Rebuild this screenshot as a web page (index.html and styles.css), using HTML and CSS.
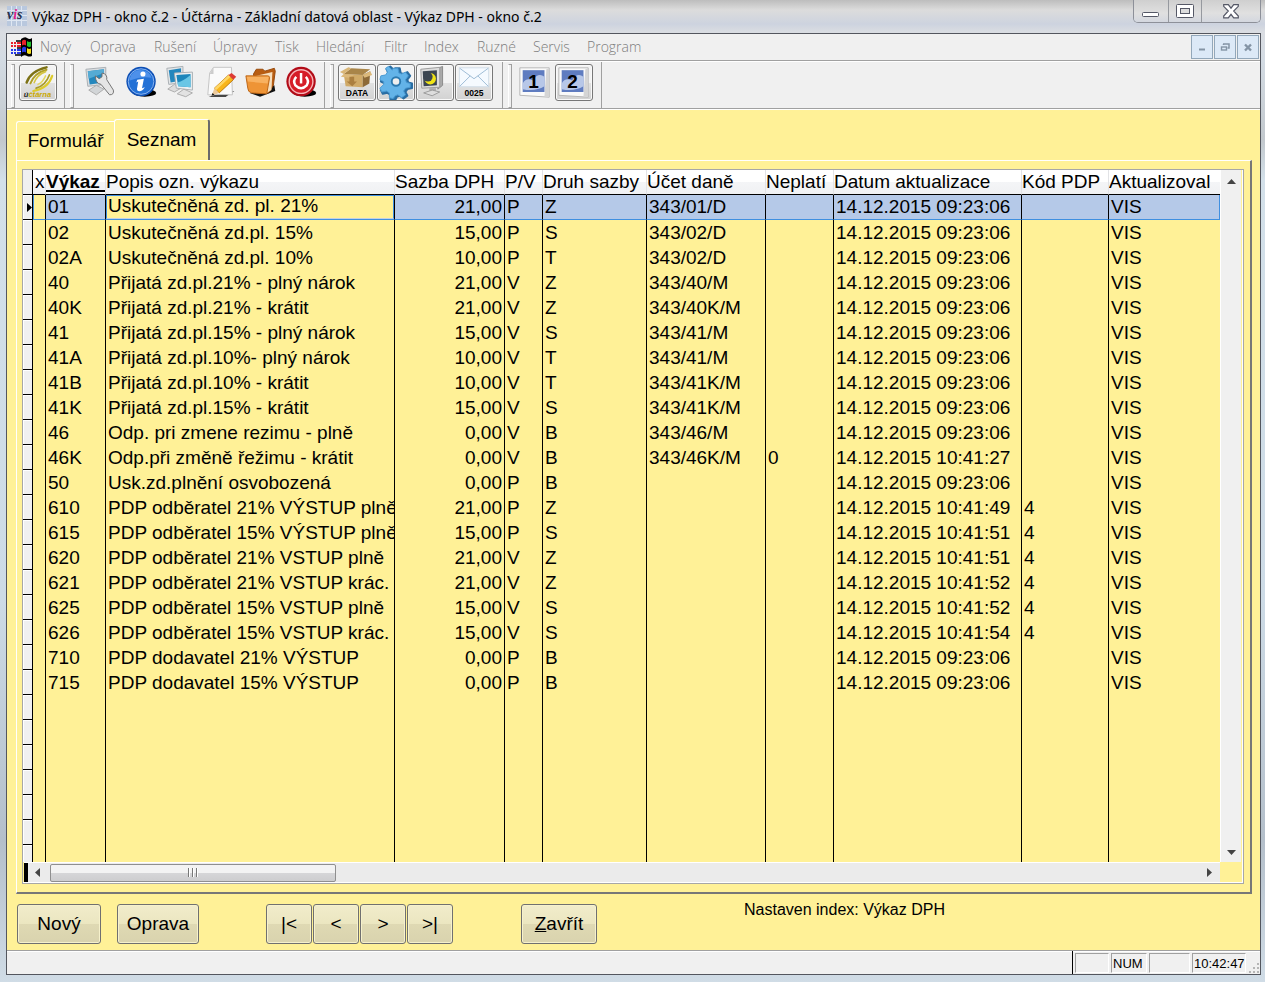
FILE: index.html
```html
<!DOCTYPE html>
<html lang="cs">
<head>
<meta charset="utf-8">
<title>Výkaz DPH - okno č.2</title>
<link rel="stylesheet" href="styles.css">
</head>
<body>
<header class="titlebar">
  <svg class="app-icon" viewBox="0 0 20 20" aria-hidden="true"><rect width="20" height="20" fill="#b9c8de"/><path d="M0 4.500h20M0 9.500h20M0 14.500h20M4.500 0v20M9.500 0v20M14.500 0v20" stroke="#dfe7f2"/><text x="0" y="13" font-family="Liberation Serif" font-style="italic" font-weight="bold" font-size="14" fill="#26304c">v<tspan fill="#e0208a">i</tspan>s</text></svg>
  <h1>Výkaz DPH - okno č.2 - Účtárna - Základní datová oblast - Výkaz DPH - okno č.2</h1>
  <div class="caption">
    <button aria-label="Minimalizovat"><svg width="18" height="6" viewBox="0 0 18 6"><rect x=".5" y=".5" width="16" height="4" rx="1" fill="#fff" stroke="#555866"/></svg></button>
    <button aria-label="Maximalizovat"><svg width="18" height="15" viewBox="0 0 18 15"><rect x=".5" y=".5" width="17" height="13" rx="1" fill="#fff" stroke="#555866"/><rect x="4.500" y="4.500" width="9" height="5" fill="#ddd" stroke="#555866"/></svg></button>
    <button aria-label="Zavřít okno"><svg width="16" height="15" viewBox="0 0 16 15"><path d="M.7.700h4.600l2.700 3.500L10.700.700h4.600v1.600L10.700 7l4.600 5v1.800h-4.600L8 10.300l-2.700 3.500H.7V12l4.600-5L.7 2.300z" fill="#fff" stroke="#555866" stroke-width="1.200"/></svg></button>
  </div>
</header>
<main class="window">
  <nav class="menubar">
    <svg class="flag" viewBox="0 0 22 20" aria-hidden="true"><path d="M10 2q4-3 6-1 3 2 5 0v18q-3 1-5 0-3-2-6 1z" fill="#000"/><path d="M11 4q2-2 4-.500v5q-2-1.500-4 0z" fill="#e8202a"/><path d="M16 4q2 1.500 4 .500v5q-2 1-4-.500z" fill="#20c030"/><path d="M11 11q2-2 4-.500v5q-2-1.500-4 0z" fill="#2438e8"/><path d="M16 11q2 1.500 4 .500v5q-2 1-4-.500z" fill="#f4e020"/><path d="M0 6h2m1 0h2m1 0h4M0 9h2m1 0h2m1 0h4" stroke="#e8202a" stroke-width="2"/><path d="M0 13h2m1 0h2m1 0h4M0 16h2m1 0h2m1 0h4" stroke="#2438e8" stroke-width="2"/><path d="M5 4h5M6 11h4M4 18h6" stroke="#000" stroke-width="1.500"/></svg>
    <ul class="menu"><li>Nový</li><li>Oprava</li><li>Rušení</li><li>Úpravy</li><li>Tisk</li><li>Hledání</li><li>Filtr</li><li>Index</li><li>Ruzné</li><li>Servis</li><li>Program</li></ul>
    <div class="mdi">
      <button aria-label="Minimalizovat dokument"><svg width="10" height="10" viewBox="0 0 10 10"><path d="M2 7.500h6" stroke="#8494a5" stroke-width="2"/></svg></button>
      <button aria-label="Obnovit dokument"><svg width="10" height="10" viewBox="0 0 10 10" fill="none" stroke="#8494a5"><path d="M3.500 3V2M3 2h6v4H7.500" stroke-width="1.500"/><rect x="1.500" y="5" width="5" height="3" stroke-width="1.400"/></svg></button>
      <button aria-label="Zavřít dokument"><svg width="10" height="10" viewBox="0 0 10 10"><path d="M2 2.500l6 6M8 2.500l-6 6" stroke="#8494a5" stroke-width="2.400"/></svg></button>
    </div>
  </nav>
  <div class="toolbar">
    <div class="group">
      <button class="tool framed" aria-label="Účtárna"><svg viewBox="0 0 38 36"><g fill="none" stroke-linecap="round"><path d="M7 18Q11 6 28 2" stroke="#7d7216" stroke-width="2.600"/><path d="M11 19Q15 8 28 4.500" stroke="#b0a028" stroke-width="2"/><path d="M15 18Q18 10 27 6.500" stroke="#d5c544" stroke-width="1.800"/><path d="M34 11Q30 24 14 27" stroke="#dccb2c" stroke-width="2.200"/><path d="M31 10Q27 21 17 24" stroke="#a89a28" stroke-width="1.800"/><path d="M27 11Q24 18 19 20" stroke="#e4d860" stroke-width="1.600"/></g><text x="4" y="33" font-family="Liberation Sans" font-size="8" font-weight="bold" font-style="italic" fill="#c9a800"><tspan fill="#222">ú</tspan>čtárna</text></svg></button>
    </div>
    <div class="group wide">
      <button class="tool" aria-label="Nastavení"><svg viewBox="0 0 38 36"><path d="M2 4l21-2v18L4 22z" fill="#d9dde0" stroke="#a8adb2"/><path d="M4 6l17-2v14L6 20z" fill="#2387bd"/><path d="M4 6l17-2v4L5 14z" fill="#55abd4"/><path d="M5 26l8-5 8 4-8 6z" fill="#d2d5d7" stroke="#aaa"/><path d="M12 11l4 3 3-2V8q6 1 5 7l7 11q1 5-4 5L18 20q-6-1-6-9z" fill="#e5e5e5" stroke="#6f6f6f"/></svg></button>
      <button class="tool" aria-label="Informace"><svg viewBox="0 0 38 36"><ellipse cx="22" cy="29" rx="12" ry="4" fill="#000"/><circle cx="18" cy="17" r="15.500" fill="#0d4fb5"/><circle cx="18" cy="17" r="13.500" fill="#2371d6" stroke="#8fb8f2"/><path d="M6 14q3-10 13-9 8 1 10 8-10-2-23 3z" fill="#4d90ea"/><circle cx="20" cy="9" r="2.700" fill="#fff"/><path d="M14 15l7-1-2 10 3-1q-3 5-7 4-2-1-1-4l1-6-2 1z" fill="#fff"/></svg></button>
      <button class="tool" aria-label="Okna"><svg viewBox="0 0 38 36"><path d="M3 3l17-2v17L5 20z" fill="#e3e6e8" stroke="#a8adb2"/><path d="M5 5l13-2v13L7 18z" fill="#2387bd"/><path d="M4 25l7-5 7 4-7 4z" fill="#ddd" stroke="#aaa"/><path d="M11 8l19-1v19l-17-2z" fill="#edf0f2" stroke="#a8adb2"/><path d="M13 10l15-1v14l-13-1z" fill="#1c86bb"/><path d="M14 18q7-2 14-8v13l-13-1z" fill="#69c6e5"/><path d="M14 30l7-5 9 4-7 4z" fill="#e2e2e2" stroke="#aaa"/></svg></button>
      <button class="tool" aria-label="Upravit"><svg viewBox="0 0 38 36"><path d="M18 29l14-2-9 6H5z" fill="#111"/><path d="M10 2h19l1 29H4l2-23z" fill="#fafafa" stroke="#c3c3c3"/><path d="M10 2v7H6z" fill="#ccc"/><path d="M11 24l15-14 5 5-15 14z" fill="#f8b51c" stroke="#bd7a10"/><path d="M11 24l15-14 2 2-15 14z" fill="#ffd766"/><path d="M26 10l3-2 5 4-3 3z" fill="#dd3b35"/><path d="M11 24l5 5-8 3z" fill="#ecc99a"/><path d="M8 32l1-3 2 2z" fill="#111"/></svg></button>
      <button class="tool" aria-label="Složka"><svg viewBox="0 0 38 36"><path d="M6 29l26-8 1 6-16 6z" fill="#111"/><path d="M10 9l3-5h7l2 2 10-3 1 3-2 15-5 8H13z" fill="#b85d12" stroke="#96480a"/><path d="M13 11l17-4-1 19-5 3z" fill="#f6dfbe"/><path d="M2 11h23q2 0 2 2l-3 17-16-1q-4-1-4-5z" fill="#ee9436" stroke="#bb6516"/><path d="M3 12h23l-1 7-21-2z" fill="#f8b160"/></svg></button>
      <button class="tool" aria-label="Konec"><svg viewBox="0 0 38 36"><ellipse cx="22" cy="29" rx="12" ry="4" fill="#000"/><circle cx="18" cy="17" r="15.500" fill="#b20c18"/><circle cx="18" cy="17" r="12.500" fill="#d61d28" stroke="#f6b5b8" stroke-width="1.500"/><path d="M13 12q-4 4-1 9 6 6 12 0 3-5-1-9" fill="none" stroke="#fff" stroke-width="2.600"/><path d="M18 8v11" stroke="#fff" stroke-width="2.600"/></svg></button>
    </div>
    <div class="group data">
      <button class="tool framed" aria-label="Data"><svg viewBox="0 0 38 36"><path d="M5 9l20 1v13l-18-1z" fill="#d0aa68"/><path d="M25 10l8-4-1 13-7 4z" fill="#8d6a38"/><path d="M5 9l8-6 20 1-8 6z" fill="#a98549"/><path d="M5 9L2 12l9 1 5-3zM25 10l2 3 8-3-2-4z" fill="#dcb97b"/><path d="M5 9l8-6-3-1-9 5z" fill="#d9b677"/><path d="M11 12v5H8l6 5 5-5-3 0v-5z" fill="#ab7f40"/><text x="19" y="32" text-anchor="middle" font-family="Liberation Sans" font-weight="bold" font-size="9">DATA</text></svg></button>
      <button class="tool framed" aria-label="Konfigurace"><svg viewBox="0 0 38 36"><g stroke-linejoin="round" stroke-width="2"><path id="gear" d="M16 5l1-2h5l1 5 3 1 4-2 3 4-3 4 1 3 4 1v5l-5 1-2 3 2 4-4 3-4-3-3 1-2 4-5-1v-5l-3-2-5 1-2-4 4-4v-3l-4-2 1-5 5-1 2-3-2-4 4-3 4 4z" transform="translate(1 0)" fill="#2a77b0" stroke="#2a6da2"/><path d="M15 5l1-2h5l1 5 3 1 4-2 3 4-3 4 1 3 4 1v4l-5 1-2 3 2 4-4 3-4-3-3 1-2 3-4-1v-5l-3-2-5 1-2-4 4-4v-3l-4-2 1-4 5-1 2-3-2-4 3-2 4 4z" fill="#63b3e8" stroke="#4b9bd3" stroke-width="1"/></g><circle cx="19" cy="17" r="4.500" fill="#eee" stroke="#2b79b0" stroke-width="2"/></svg></button>
      <button class="tool framed" aria-label="Noční režim"><svg viewBox="0 0 38 36"><path d="M22 3l5-2v20l-5 4z" fill="#aaa" stroke="#888"/><path d="M4 4l20-2v21L5 24z" fill="#ddd" stroke="#999"/><path d="M6 6l15-1v16L7 22z" fill="#3c4651"/><circle cx="14" cy="14" r="6" fill="#f0e416"/><circle cx="11.500" cy="12" r="5" fill="#3c4651"/><path d="M13 24h7v4h-7z" fill="#aaa"/><path d="M7 29l9-3 8 2-8 4z" fill="#ddd" stroke="#999"/></svg></button>
      <button class="tool framed" aria-label="Zprávy 0025"><svg viewBox="0 0 38 36"><rect x="3.500" y="2.500" width="31" height="20" fill="#f5faff" stroke="#d0dce7"/><path d="M4 3l15 11L34 3M4 22l11-11m8 0l11 11" fill="none" stroke="#9bb9d4"/><text x="19" y="32" text-anchor="middle" font-family="Liberation Sans" font-weight="bold" font-size="9">0025</text></svg></button>
    </div>
    <div class="group views">
      <button class="tool" aria-label="Okno 1"><svg viewBox="0 0 38 36"><path d="M3 2.500h31v31l-31-2z" fill="#fafafa" stroke="#b5b5b5"/><path d="M31 4l3-1v30h-5z" fill="#d5d5d5"/><path d="M6 5h23v23H6z" fill="#5f7cc0"/><path d="M6 19q4-7 11-3 5-9 12-4v10q-10 6-23 3z" fill="#b7c7e8"/><text x="17.500" y="24" text-anchor="middle" font-family="Liberation Sans" font-weight="bold" font-size="20">1</text></svg></button>
      <button class="tool framed" aria-label="Okno 2"><svg viewBox="0 0 38 36"><path d="M3 2.500h31v31l-31-2z" fill="#fafafa" stroke="#b5b5b5"/><path d="M31 4l3-1v30h-5z" fill="#d5d5d5"/><path d="M6 5h23v23H6z" fill="#5f7cc0"/><path d="M6 19q4-7 11-3 5-9 12-4v10q-10 6-23 3z" fill="#b7c7e8"/><text x="17.500" y="24" text-anchor="middle" font-family="Liberation Sans" font-weight="bold" font-size="20">2</text></svg></button>
    </div>
  </div>
  <section class="client">
    <div class="tabs" role="tablist">
      <button class="tab" role="tab">Formulář</button>
      <button class="tab active" role="tab" aria-selected="true">Seznam</button>
    </div>
    <div class="panel">
      <div class="grid">
        <div class="rows">
          <table>
            <colgroup><col class="c-sel"><col class="c-x"><col class="c-code"><col class="c-name"><col class="c-rate"><col class="c-pv"><col class="c-kind"><col class="c-acc"><col class="c-off"><col class="c-date"><col class="c-pdp"><col></colgroup>
            <thead><tr><th></th><th>x</th><th class="sorted">Výkaz</th><th>Popis ozn. výkazu</th><th>Sazba DPH</th><th>P/V</th><th>Druh sazby</th><th>Účet daně</th><th>Neplatí</th><th>Datum aktualizace</th><th>Kód PDP</th><th>Aktualizoval</th></tr></thead>
            <tbody>
              <tr class="current"><td><svg width="5" height="9" viewBox="0 0 5 9"><path d="M0 0l5 4.500L0 9z"/></svg></td><td></td><td>01</td><td><input aria-label="Popis ozn. výkazu" value="Uskutečněná zd. pl. 21%"></td><td>21,00</td><td>P</td><td>Z</td><td>343/01/D</td><td></td><td>14.12.2015 09:23:06</td><td></td><td>VIS</td></tr>
              <tr><td></td><td></td><td>02</td><td>Uskutečněná zd.pl. 15%</td><td>15,00</td><td>P</td><td>S</td><td>343/02/D</td><td></td><td>14.12.2015 09:23:06</td><td></td><td>VIS</td></tr>
              <tr><td></td><td></td><td>02A</td><td>Uskutečněná zd.pl. 10%</td><td>10,00</td><td>P</td><td>T</td><td>343/02/D</td><td></td><td>14.12.2015 09:23:06</td><td></td><td>VIS</td></tr>
              <tr><td></td><td></td><td>40</td><td>Přijatá zd.pl.21% - plný nárok</td><td>21,00</td><td>V</td><td>Z</td><td>343/40/M</td><td></td><td>14.12.2015 09:23:06</td><td></td><td>VIS</td></tr>
              <tr><td></td><td></td><td>40K</td><td>Přijatá zd.pl.21% - krátit</td><td>21,00</td><td>V</td><td>Z</td><td>343/40K/M</td><td></td><td>14.12.2015 09:23:06</td><td></td><td>VIS</td></tr>
              <tr><td></td><td></td><td>41</td><td>Přijatá zd.pl.15% - plný nárok</td><td>15,00</td><td>V</td><td>S</td><td>343/41/M</td><td></td><td>14.12.2015 09:23:06</td><td></td><td>VIS</td></tr>
              <tr><td></td><td></td><td>41A</td><td>Přijatá zd.pl.10%- plný nárok</td><td>10,00</td><td>V</td><td>T</td><td>343/41/M</td><td></td><td>14.12.2015 09:23:06</td><td></td><td>VIS</td></tr>
              <tr><td></td><td></td><td>41B</td><td>Přijatá zd.pl.10% - krátit</td><td>10,00</td><td>V</td><td>T</td><td>343/41K/M</td><td></td><td>14.12.2015 09:23:06</td><td></td><td>VIS</td></tr>
              <tr><td></td><td></td><td>41K</td><td>Přijatá zd.pl.15% - krátit</td><td>15,00</td><td>V</td><td>S</td><td>343/41K/M</td><td></td><td>14.12.2015 09:23:06</td><td></td><td>VIS</td></tr>
              <tr><td></td><td></td><td>46</td><td>Odp. pri zmene rezimu - plně</td><td>0,00</td><td>V</td><td>B</td><td>343/46/M</td><td></td><td>14.12.2015 09:23:06</td><td></td><td>VIS</td></tr>
              <tr><td></td><td></td><td>46K</td><td>Odp.při změně řežimu - krátit</td><td>0,00</td><td>V</td><td>B</td><td>343/46K/M</td><td>0</td><td>14.12.2015 10:41:27</td><td></td><td>VIS</td></tr>
              <tr><td></td><td></td><td>50</td><td>Usk.zd.plnění osvobozená</td><td>0,00</td><td>P</td><td>B</td><td></td><td></td><td>14.12.2015 09:23:06</td><td></td><td>VIS</td></tr>
              <tr><td></td><td></td><td>610</td><td>PDP odběratel 21% VÝSTUP plně</td><td>21,00</td><td>P</td><td>Z</td><td></td><td></td><td>14.12.2015 10:41:49</td><td>4</td><td>VIS</td></tr>
              <tr><td></td><td></td><td>615</td><td>PDP odběratel 15% VÝSTUP plně</td><td>15,00</td><td>P</td><td>S</td><td></td><td></td><td>14.12.2015 10:41:51</td><td>4</td><td>VIS</td></tr>
              <tr><td></td><td></td><td>620</td><td>PDP odběratel 21% VSTUP plně</td><td>21,00</td><td>V</td><td>Z</td><td></td><td></td><td>14.12.2015 10:41:51</td><td>4</td><td>VIS</td></tr>
              <tr><td></td><td></td><td>621</td><td>PDP odběratel 21% VSTUP krác.</td><td>21,00</td><td>V</td><td>Z</td><td></td><td></td><td>14.12.2015 10:41:52</td><td>4</td><td>VIS</td></tr>
              <tr><td></td><td></td><td>625</td><td>PDP odběratel 15% VSTUP plně</td><td>15,00</td><td>V</td><td>S</td><td></td><td></td><td>14.12.2015 10:41:52</td><td>4</td><td>VIS</td></tr>
              <tr><td></td><td></td><td>626</td><td>PDP odběratel 15% VSTUP krác.</td><td>15,00</td><td>V</td><td>S</td><td></td><td></td><td>14.12.2015 10:41:54</td><td>4</td><td>VIS</td></tr>
              <tr><td></td><td></td><td>710</td><td>PDP dodavatel 21% VÝSTUP</td><td>0,00</td><td>P</td><td>B</td><td></td><td></td><td>14.12.2015 09:23:06</td><td></td><td>VIS</td></tr>
              <tr><td></td><td></td><td>715</td><td>PDP dodavatel 15% VÝSTUP</td><td>0,00</td><td>P</td><td>B</td><td></td><td></td><td>14.12.2015 09:23:06</td><td></td><td>VIS</td></tr>
              <tr><td></td><td></td><td></td><td></td><td></td><td></td><td></td><td></td><td></td><td></td><td></td><td></td></tr>
              <tr><td></td><td></td><td></td><td></td><td></td><td></td><td></td><td></td><td></td><td></td><td></td><td></td></tr>
              <tr><td></td><td></td><td></td><td></td><td></td><td></td><td></td><td></td><td></td><td></td><td></td><td></td></tr>
              <tr><td></td><td></td><td></td><td></td><td></td><td></td><td></td><td></td><td></td><td></td><td></td><td></td></tr>
              <tr><td></td><td></td><td></td><td></td><td></td><td></td><td></td><td></td><td></td><td></td><td></td><td></td></tr>
              <tr><td></td><td></td><td></td><td></td><td></td><td></td><td></td><td></td><td></td><td></td><td></td><td></td></tr>
              <tr><td></td><td></td><td></td><td></td><td></td><td></td><td></td><td></td><td></td><td></td><td></td><td></td></tr>
            </tbody>
          </table>
        </div>
        <div class="vscroll"><svg width="9" height="5" viewBox="0 0 9 5"><path d="M0 5L4.500 0 9 5z" fill="#444"/></svg><svg width="9" height="5" viewBox="0 0 9 5"><path d="M0 0h9L4.500 5z" fill="#444"/></svg></div>
        <div class="hscroll"><span class="split"></span><svg width="5" height="9" viewBox="0 0 5 9"><path d="M5 0v9L0 4.500z" fill="#444"/></svg><span class="thumb"><i></i><i></i><i></i></span><svg class="right" width="5" height="9" viewBox="0 0 5 9"><path d="M0 0v9l5-4.500z" fill="#444"/></svg></div>
      </div>
    </div>
    <div class="actions">
      <button class="btn b-new">Nový</button>
      <button class="btn b-edit">Oprava</button>
      <div class="pager"><button class="btn">|&lt;</button><button class="btn">&lt;</button><button class="btn">&gt;</button><button class="btn">&gt;|</button></div>
      <button class="btn b-close"><u>Z</u>avřít</button>
      <p class="index-note">Nastaven index: Výkaz DPH</p>
    </div>
  </section>
  <footer class="status">
    <div class="cells"><span class="s-a"></span><span class="s-num">NUM</span><span class="s-b"></span><span class="s-time">10:42:47</span></div>
    <svg class="grip" width="12" height="12" viewBox="0 0 12 12"><path d="M9 1h2v2H9zM5 5h2v2H5zM9 5h2v2H9zM1 9h2v2H1zM5 9h2v2H5zM9 9h2v2H9z" fill="#b5b5b5"/></svg>
  </footer>
</main>
</body>
</html>
```
FILE: styles.css
```css
* { box-sizing: border-box; }

body {
  margin: 0;
  height: 100vh;
  padding: 0 4px 7px 6px;
  display: flex;
  flex-direction: column;
  overflow: hidden;
  font: 19px/24px "Liberation Sans", Arial, sans-serif;
  color: #000;
  background: linear-gradient(180deg, #bdbdbd 0, #dcdcdc 10px, #cdd3df 24px, #dadde2 32px, #d3dbe3 60px, #c2c8cd 140px, #d3e0e9 180px, #cddbe6 600px, #b4bfca 840px, #d0dce6 100%);
}

button, input { font: inherit; color: inherit; margin: 0; padding: 0; }
button { display: flex; align-items: center; justify-content: center; }
svg { display: block; flex: none; }

.titlebar { height: 33px; flex: none; display: flex; align-items: flex-start; }
.app-icon { width: 20px; height: 20px; margin: 6px 5px 0 1px; }
.titlebar h1 {
  flex: 1;
  margin: 5px 0 0;
  font: 400 14px/24px "Noto Sans", "Open Sans", sans-serif;
  white-space: nowrap;
}
.caption {
  display: flex;
  width: 128px;
  height: 23px;
  border: 1px solid #8d9099;
  border-top: 0;
  border-radius: 0 0 5px 5px;
  overflow: hidden;
}
.caption button { width: 33px; border: 0; border-right: 1px solid #96999f; background: linear-gradient(#cfcfcf, #e0e0e0 60%, #d3d7df); }
.caption button:first-child { width: 35px; align-items: flex-end; padding-bottom: 4px; }
.caption button:last-child { flex: 1; border-right: 0; }

.window {
  flex: 1;
  min-height: 0;
  display: flex;
  flex-direction: column;
  border: 1px solid #53565e;
  background: #f0f0f0;
}

.menubar { height: 27px; flex: none; display: flex; align-items: center; border-bottom: 1px solid #a0a0a0; }
.flag { width: 22px; height: 20px; margin: 0 7px 0 4px; }
.menu {
  flex: 1;
  display: grid;
  grid-template-columns: 50px 64px 59px 62px 41px 68px 40px 53px 56px 54px auto;
  margin: 0;
  padding: 0;
  list-style: none;
  font: 300 14px/24px "Open Sans", "Noto Sans", sans-serif;
  color: #7d7d7d;
}
.mdi { display: flex; gap: 1px; margin-right: 1px; }
.mdi button { width: 22px; height: 24px; background: #dce9f7; border: 1px solid #92a7ba; }

.toolbar { height: 49px; flex: none; display: flex; border-top: 1px solid #fff; border-bottom: 1px solid #fff; box-shadow: inset 0 -1px #a0a0a0; }
.group {
  display: flex;
  align-items: flex-start;
  gap: 1px;
  width: 58px;
  margin-right: 1px;
  padding: 2px 0 0 4px;
  border-right: 1px solid #a0a0a0;
}
.group::before { content: ""; width: 2px; height: 42px; margin-right: 3px; border: 1px solid #a0a0a0; border-left-color: #fff; }
.group.wide { width: 259px; gap: 2px; }
.group.wide::before { margin-right: 7px; }
.group.data { width: 177px; }
.group.views { width: 98px; }
.tool { width: 38px; height: 37px; border: 1px solid transparent; border-radius: 3px; background: none; }
.tool svg { width: 36px; height: 35px; }
.framed { border-color: #777; background: linear-gradient(#f3f3f3 50%, #e2e2e2 50%, #d2d2d2); box-shadow: inset 0 0 0 1px #f9f9f9; }

.client { flex: 1; min-height: 0; display: flex; flex-direction: column; padding: 9px 8px 0 9px; background: #fff197; }
.tabs { display: flex; align-items: flex-end; flex: none; margin-bottom: -1px; }
.tab { width: 98px; height: 40px; background: #fff197; border: solid #fff; border-width: 1px 0 1px 1px; border-radius: 3px 0 0 0; }
.tab.active { width: 96px; height: 42px; padding-bottom: 1px; border-right: 2px solid #6b6b6b; border-bottom-color: #fff197; border-radius: 3px 3px 0 0; }
.panel {
  flex: 1;
  min-height: 0;
  display: flex;
  padding: 8px 6px 8px 5px;
  border: solid #fff;
  border-width: 1px 2px 2px 1px;
  border-right-color: #777;
  border-bottom-color: #777;
}
.grid {
  flex: 1;
  min-width: 0;
  display: grid;
  grid-template: minmax(0, 1fr) 21px / minmax(0, 1fr) 23px;
  border: 1px solid #a7a7a7;
  box-shadow: inset -1px -1px #fff;
}
.rows { overflow: hidden; }

table { width: 100%; table-layout: fixed; border-collapse: separate; border-spacing: 0; }
.c-sel { width: 10px; }
.c-x { width: 13px; }
.c-code { width: 60px; }
.c-name { width: 289px; }
.c-rate { width: 110px; }
.c-pv { width: 38px; }
.c-kind { width: 104px; }
.c-acc { width: 119px; }
.c-off { width: 68px; }
.c-date { width: 188px; }
.c-pdp { width: 87px; }
th, td { height: 25px; line-height: 24px; overflow: hidden; white-space: nowrap; text-align: left; border-right: 1px solid #000; }
th { padding: 0; font-weight: 400; background: linear-gradient(#fff 50%, #f4f5f7 50%, #f0f1f3); border-right-color: #e2e3e6; border-bottom: 1px solid #000; }
th:nth-child(2) { padding-left: 2px; }
th:first-child { background: #f0f0f0; border-right-color: #000; }
th:last-child { border-right: 0; }
th.sorted { font-weight: 700; box-shadow: inset 0 -2px #fff, inset 0 -4px #000; }
td { padding: 0 2px; }
td:nth-child(5) { text-align: right; }
td:first-child { padding: 0; background: #f0f0f0; border-bottom: 1px solid #000; box-shadow: inset 1px 1px #fff; }
td:first-child svg { margin-left: 4px; }
td:last-child { border-right: 0; }
.current td:nth-child(n+2) { background: #b5c9e8; border-bottom: 1px solid #3f8fe0; }
.current td:nth-child(2) { background: #fff197; box-shadow: inset 1px 0 #3f8fe0; }
.current td:nth-child(4) { padding: 0; background: #fff197; }
.current td:last-child { border-right: 1px solid #3f8fe0; }
.current input { display: block; width: 100%; height: 24px; padding: 0 1px 2px; border: 1px solid #3f8fe0; border-bottom-color: #c5d2e0; background: #fff197; outline: 0; }

.vscroll { display: flex; flex-direction: column; align-items: center; justify-content: space-between; margin-right: 2px; padding: 9px 0 7px; background: #f0f0f0; border-left: 1px solid #fff; }
.hscroll { display: flex; align-items: center; margin: 0 0 1px 1px; border-top: 1px solid #fff; background: #ebebeb; }
.split { width: 4px; height: 100%; margin-right: 7px; background: #000; }
.thumb {
  display: flex;
  align-items: center;
  justify-content: center;
  gap: 2px;
  width: 286px;
  height: 18px;
  margin-left: 10px;
  border: 1px solid #8f8f8f;
  border-radius: 2px;
  background: linear-gradient(#f3f3f3 50%, #d6d6d8 50%, #cdcdcf);
}
.thumb i { width: 2px; height: 9px; background: linear-gradient(90deg, #777 50%, #fff 50%); }
.hscroll .right { margin-left: auto; margin-right: 8px; }

.actions { flex: none; display: flex; align-items: flex-start; padding: 10px 0 6px 1px; }
.btn { width: 46px; height: 40px; border: 1px solid #707070; border-radius: 3px; background: linear-gradient(#f1eccb, #ebe6c0 50%, #dfd9b3 50%, #d9d3ae); box-shadow: inset 0 0 0 1px #f6f1cc; }
.b-new { width: 84px; margin-right: 16px; }
.b-edit { width: 82px; margin-right: 67px; }
.pager { display: flex; gap: 1px; margin-right: 68px; }
.b-close { width: 76px; margin-right: 147px; }
.index-note { margin: 0; padding-top: 0; font-size: 16px; line-height: 12px; }

.status { height: 24px; flex: none; display: flex; justify-content: flex-end; border-top: 1px solid #a0a0a0; box-shadow: inset 0 1px #fff; }
.cells { display: flex; gap: 2px; padding: 2px 0 1px 2px; border-left: 1px solid #000; font-size: 13px; line-height: 19px; }
.cells span { border: 1px solid #a0a0a0; border-right-color: #fff; border-bottom-color: #fff; overflow: hidden; white-space: nowrap; padding-left: 1px; }
.s-a { width: 34px; }
.s-num { width: 36px; }
.s-b { width: 41px; }
.s-time { width: 54px; }
.grip { align-self: flex-end; margin-left: 2px; }
```
